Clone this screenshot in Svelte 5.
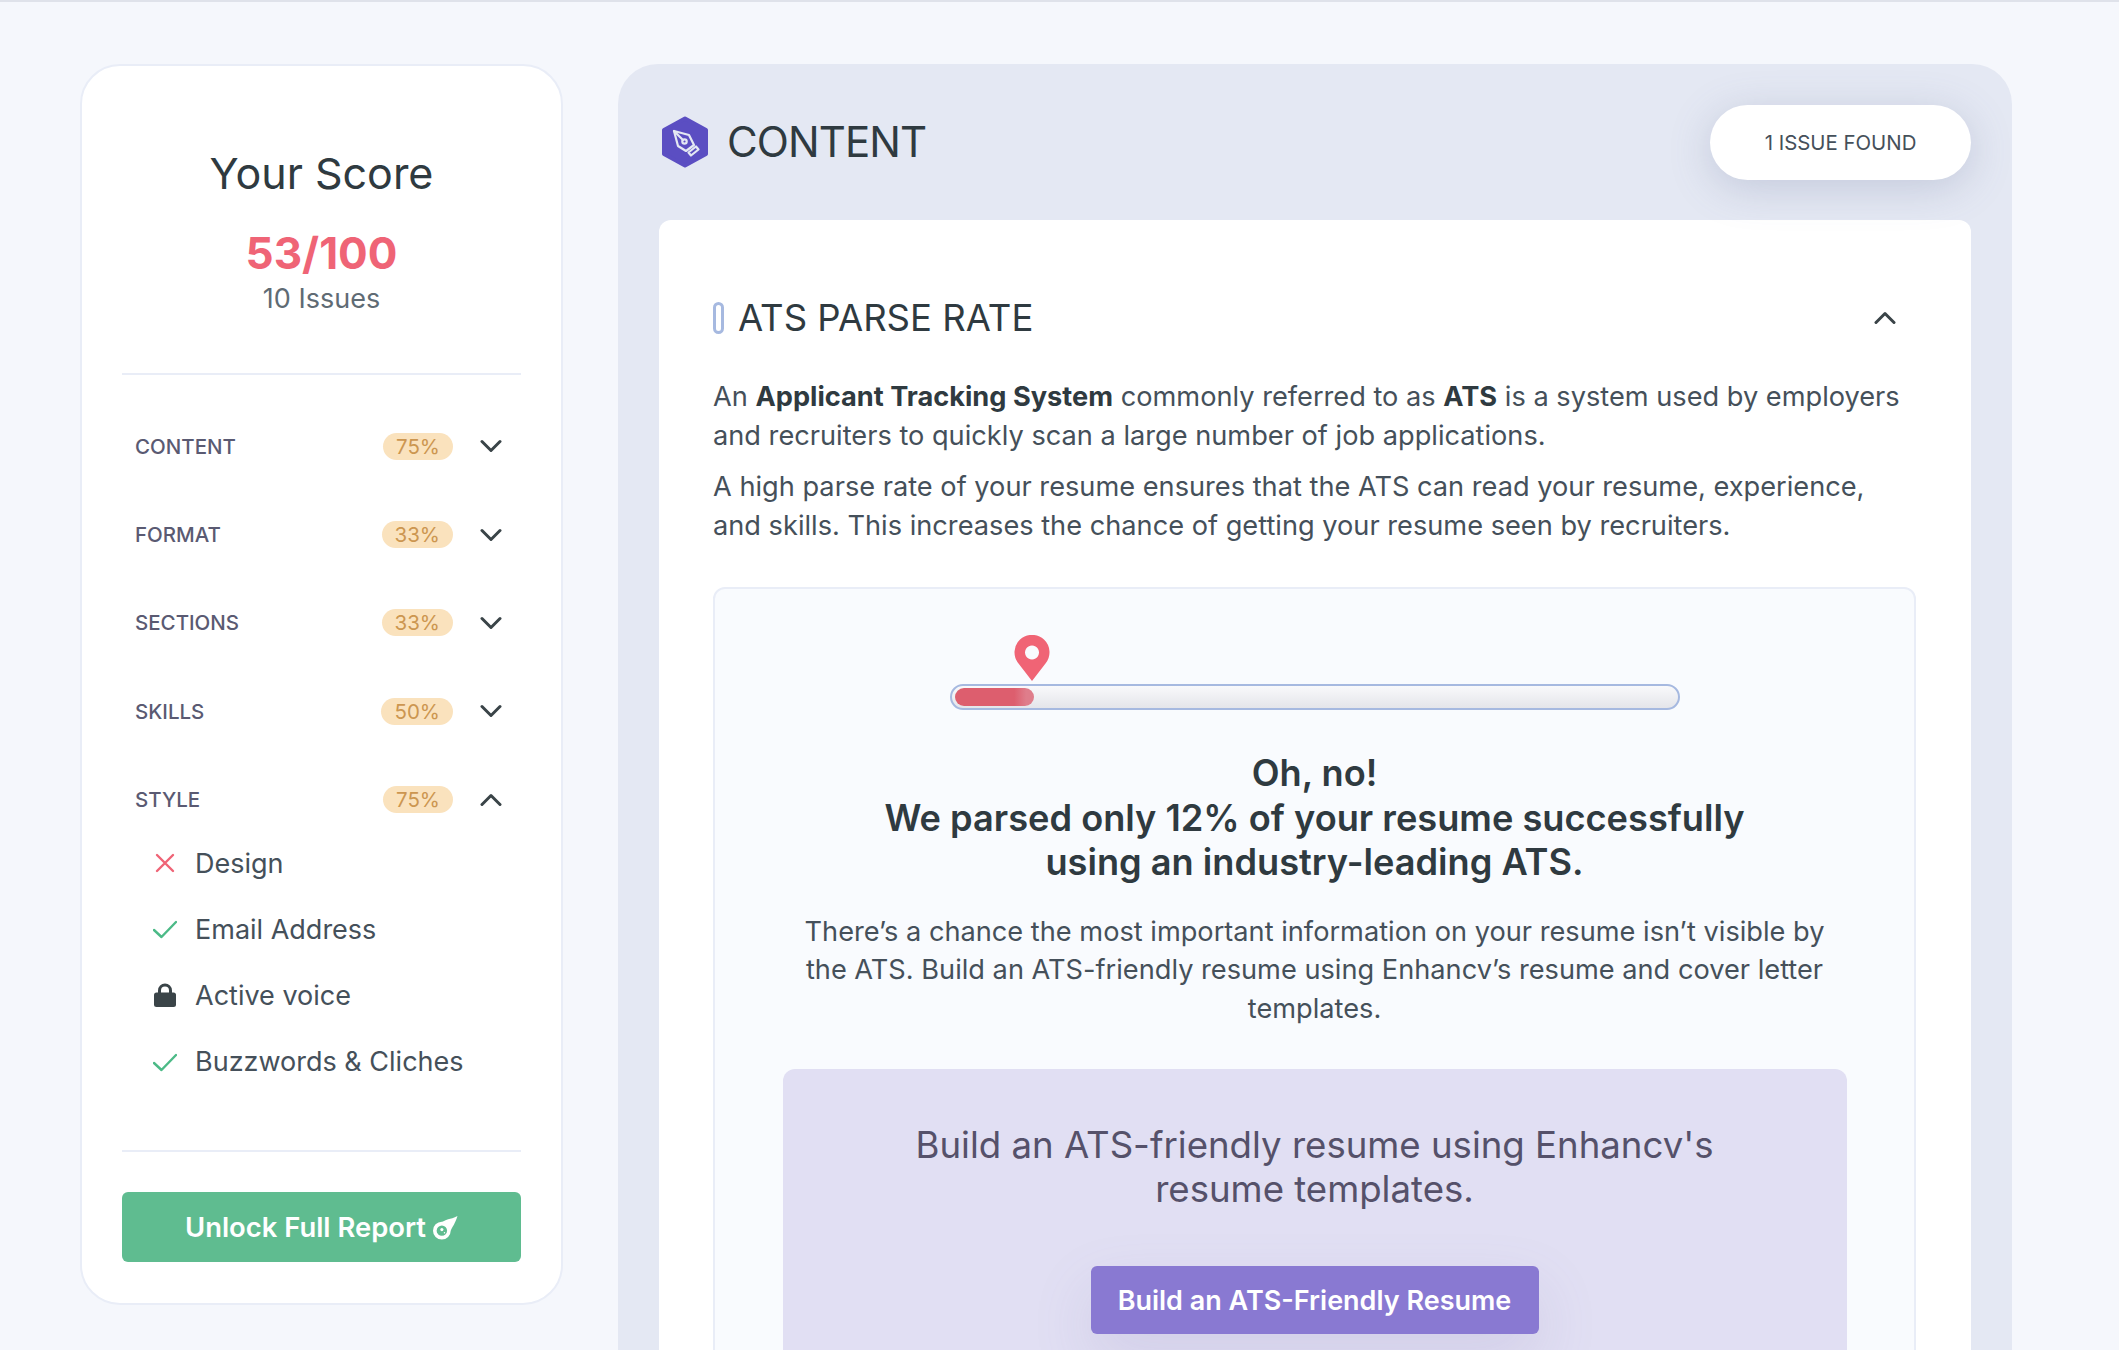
<script>
  const categories = [
    { name: 'CONTENT', pct: '75%' },
    { name: 'FORMAT', pct: '33%' },
    { name: 'SECTIONS', pct: '33%' },
    { name: 'SKILLS', pct: '50%' },
    { name: 'STYLE', pct: '75%', open: true }
  ];

  const style_items = [
    { label: 'Design', status: 'fail' },
    { label: 'Email Address', status: 'ok' },
    { label: 'Active voice', status: 'locked' },
    { label: 'Buzzwords & Cliches', status: 'ok' }
  ];
</script>

<div class="page">
  <aside class="sidebar">
    <div class="score">
      <h2>Your Score</h2>
      <div class="value">53/100</div>
      <div class="issues">10 Issues</div>
    </div>

    <div class="categories">
      {#each categories as cat}
        <div class="cat_row">
          <span class="cat_name">{cat.name}</span>
          <span class="badge">{cat.pct}</span>
          <svg class="chevron" class:up={cat.open} viewBox="0 0 22 14" width="22" height="14">
            <path d="M2 2.500 11 11.500 20 2.500" fill="none" stroke="#3a4448" stroke-width="3" stroke-linecap="round" stroke-linejoin="round" />
          </svg>
        </div>
        {#if cat.open}
          <ul class="items">
            {#each style_items as item}
              <li>
                <span class="item_icon">
                  {#if item.status === 'fail'}
                    <svg viewBox="0 0 24 24" width="24" height="24">
                      <path d="M4 4 20 20M20 4 4 20" fill="none" stroke="#ef6476" stroke-width="2.400" stroke-linecap="round" />
                    </svg>
                  {:else if item.status === 'ok'}
                    <svg viewBox="0 0 24 24" width="24" height="24">
                      <path d="M1 13 8.500 20 23 5" fill="none" stroke="#4cba87" stroke-width="2.400" stroke-linecap="round" stroke-linejoin="round" />
                    </svg>
                  {:else}
                    <svg viewBox="0 0 24 24" width="24" height="24">
                      <path d="M6.500 10V7.500a5.500 5.500 0 0 1 11 0V10" fill="none" stroke="#3a4448" stroke-width="3" />
                      <rect x="1" y="9.500" width="22" height="14.500" rx="2.500" fill="#3a4448" />
                    </svg>
                  {/if}
                </span>
                {item.label}
              </li>
            {/each}
          </ul>
        {/if}
      {/each}
    </div>

    <button class="unlock">
      Unlock Full Report
      <svg viewBox="0 0 24 24" width="25" height="25">
        <path d="M23.500 1C20 3 17 3.500 14.500 4L12 5C10 6 8.500 6.500 8.500 6.500A8.500 8.500 0 1 0 17 15C18.500 11.500 21.500 8 23.500 1Z" fill="#fff" />
        <circle cx="8.500" cy="15" r="5" fill="#5fbc90" />
        <circle cx="8.500" cy="14" r="1.500" fill="#fff" />
        <circle cx="11" cy="17" r="0.700" fill="#fff" />
      </svg>
    </button>
  </aside>

  <main class="panel">
    <header class="panel_head">
      <div class="panel_title">
        <svg viewBox="0 0 48 52" width="48" height="52">
          <path d="M24 2.500 45 14V38L24 49.500 3 38V14Z" fill="#5b4ec2" stroke="#5b4ec2" stroke-width="4" stroke-linejoin="round" />
          <g fill="none" stroke="#e4e8f3" stroke-width="2.200" stroke-linejoin="round" stroke-linecap="round">
            <path d="M13 15 28 19 33 29 25 35 17 30Z" />
            <path d="M13 15 22 24" />
            <circle cx="23.500" cy="25.500" r="2.200" />
            <path d="M27.500 36.500 35 30.500 37.500 33.500 30 39.500Z" />
          </g>
        </svg>
        <h1>CONTENT</h1>
      </div>
      <div class="pill">1 ISSUE FOUND</div>
    </header>

    <section class="card">
      <div class="section_head">
        <span class="marker"></span>
        <h3>ATS PARSE RATE</h3>
        <svg class="chevron up" viewBox="0 0 22 14" width="22" height="14">
          <path d="M2 2.500 11 11.500 20 2.500" fill="none" stroke="#3a4448" stroke-width="3" stroke-linecap="round" stroke-linejoin="round" />
        </svg>
      </div>

      <p class="intro">An <b>Applicant Tracking System</b> commonly referred to as <b>ATS</b> is a system used by employers and recruiters to quickly scan a large number of job applications.</p>
      <p class="intro second">A high parse rate of your resume ensures that the ATS can read your resume, experience, and skills. This increases the chance of getting your resume seen by recruiters.</p>

      <div class="result">
        <div class="meter">
          <svg class="pin" viewBox="0 0 36 46" width="36" height="46">
            <path fill-rule="evenodd" d="M18 46 4.500 28.500A17.500 17.500 0 1 1 31.500 28.500ZM18 10.500a7 7 0 1 0 .01 0Z" fill="#f06475" />
          </svg>
          <div class="track"><div class="fill" style="width: {11}%"></div></div>
        </div>

        <h4>Oh, no!<br />We parsed only 12% of your resume successfully<br />using an industry-leading ATS.</h4>
        <p class="explain">There’s a chance the most important information on your resume isn’t visible by the ATS. Build an ATS-friendly resume using Enhancv’s resume and cover letter templates.</p>

        <div class="promo">
          <p>Build an ATS-friendly resume using Enhancv's<br />resume templates.</p>
          <button class="build">Build an ATS-Friendly Resume</button>
        </div>
      </div>
    </section>
  </main>
</div>

<style>
  :global(body) {
    margin: 0;
    background: #f5f7fc;
  }

  .page {
    height: 1350px;
    box-sizing: border-box;
    border-top: 2px solid #dfe2ea;
    padding: 62px 0 0 80px;
    display: flex;
    align-items: flex-start;
    gap: 55px;
    overflow: hidden;
    font-family: Inter, "Noto Sans", sans-serif;
    color: #45505a;
  }

  .sidebar {
    width: 483px;
    height: 1241px;
    flex: none;
    box-sizing: border-box;
    background: #fff;
    border: 2px solid #e9edf7;
    border-radius: 40px;
    padding: 0 40px;
    display: flex;
    flex-direction: column;
  }

  .score {
    text-align: center;
    border-bottom: 2px solid #e9edf7;
    height: 309px;
    box-sizing: border-box;
    padding-top: 83px;
  }

  h2 {
    margin: 0;
    font-size: 43px;
    line-height: 48px;
    font-weight: 400;
    color: #2f3a40;
  }

  .value {
    margin-top: 31px;
    font-size: 44px;
    line-height: 50px;
    font-weight: 700;
    color: #ef6476;
  }

  .issues {
    margin-top: 3px;
    font-size: 27px;
    line-height: 36px;
    color: #5f6b74;
  }

  .categories {
    padding: 27px 19px 0 13px;
    height: 777px;
    box-sizing: border-box;
    border-bottom: 2px solid #e9edf7;
  }

  .cat_row {
    display: flex;
    align-items: center;
    height: 88.400px;
  }

  .cat_name {
    flex: 1;
    font-size: 20.500px;
    font-weight: 500;
    color: #5a5a72;
  }

  .badge {
    background: #fae2bd;
    color: #cc9650;
    font-size: 20.500px;
    line-height: 27px;
    padding: 0 13px;
    border-radius: 14px;
  }

  .chevron {
    margin-left: 27px;
    flex: none;
  }

  .chevron.up {
    transform: rotate(180deg);
  }

  .items {
    list-style: none;
    margin: -14px 0 0;
    padding: 0;
  }

  .items li {
    display: flex;
    align-items: center;
    height: 66.200px;
    font-size: 27px;
    color: #45505a;
  }

  .item_icon {
    width: 24px;
    margin: 0 18px 0 18px;
    display: flex;
  }

  .unlock {
    margin-top: 40px;
    height: 70px;
    border: none;
    border-radius: 6px;
    background: #5fbc90;
    color: #fff;
    font-family: inherit;
    font-size: 27.400px;
    font-weight: 600;
    display: flex;
    align-items: center;
    justify-content: center;
    gap: 7px;
  }

  .panel {
    width: 1394px;
    flex: none;
    background: #e4e8f3;
    border-radius: 40px;
    padding: 0 41px;
    box-sizing: border-box;
  }

  .panel_head {
    height: 156px;
    display: flex;
    align-items: center;
    justify-content: space-between;
    padding-left: 2px;
  }

  .panel_title {
    display: flex;
    align-items: center;
    gap: 18px;
  }

  h1 {
    margin: -2px 0 0;
    font-size: 42px;
    font-weight: 400;
    letter-spacing: -0.900px;
    color: #2f3a40;
  }

  .pill {
    width: 261px;
    height: 75px;
    background: #fff;
    border-radius: 38px;
    display: flex;
    align-items: center;
    justify-content: center;
    font-size: 20.400px;
    color: #45505a;
    box-shadow: 0 8px 40px rgba(100, 110, 150, 0.25);
  }

  .card {
    background: #fff;
    border-radius: 12px 12px 0 0;
    padding: 78px 55px 0 54px;
    height: 1200px;
  }

  .section_head {
    display: flex;
    align-items: center;
    height: 40px;
    margin-bottom: 39px;
  }

  .marker {
    width: 5px;
    height: 26px;
    border: 3px solid #a6b9e0;
    border-radius: 6px;
    margin-right: 14px;
  }

  h3 {
    flex: 1;
    margin: 0;
    font-size: 36.500px;
    font-weight: 400;
    color: #2f3a40;
  }

  .section_head .chevron {
    margin-right: 20px;
  }

  .intro {
    margin: 0;
    font-size: 27.200px;
    line-height: 39px;
  }

  .intro b {
    font-weight: 700;
    color: #2f3a40;
  }

  .intro.second {
    margin-top: 12px;
  }

  .result {
    margin-top: 42px;
    border: 2px solid #e9edf7;
    border-radius: 12px;
    background: #f9fbfe;
    padding: 95px 0 0;
    text-align: center;
    height: 900px;
    box-sizing: border-box;
  }

  .meter {
    position: relative;
    width: 730px;
    margin: 0 auto;
  }

  .pin {
    position: absolute;
    left: 64px;
    top: -49px;
  }

  .track {
    height: 26px;
    box-sizing: border-box;
    border: 2px solid #a6b9e0;
    border-radius: 13px;
    padding: 2px 3px;
    background: linear-gradient(#f9f9fb, #e4e5ea);
  }

  .fill {
    height: 100%;
    border-radius: 9px;
    background: linear-gradient(90deg, #dd5e6e 75%, #df7d8b 90%);
  }

  h4 {
    margin: 41px 0 0;
    font-size: 36.200px;
    line-height: 44.500px;
    font-weight: 600;
    color: #2f3a40;
  }

  .explain {
    width: 1040px;
    margin: 28px auto 0;
    font-size: 27.200px;
    line-height: 38.500px;
  }

  .promo {
    width: 1064px;
    height: 400px;
    margin: 41px auto 0;
    background: #e1dff3;
    border-radius: 12px;
    padding-top: 54px;
    box-sizing: border-box;
  }

  .promo p {
    margin: 0;
    font-size: 36.600px;
    line-height: 44px;
    color: #55516a;
  }

  .build {
    margin-top: 55px;
    width: 448px;
    height: 68px;
    border: none;
    border-radius: 6px;
    background: #8979d2;
    color: #fff;
    font-family: inherit;
    font-size: 27px;
    font-weight: 600;
    box-shadow: 0 24px 60px rgba(120, 110, 170, 0.15);
  }
</style>
